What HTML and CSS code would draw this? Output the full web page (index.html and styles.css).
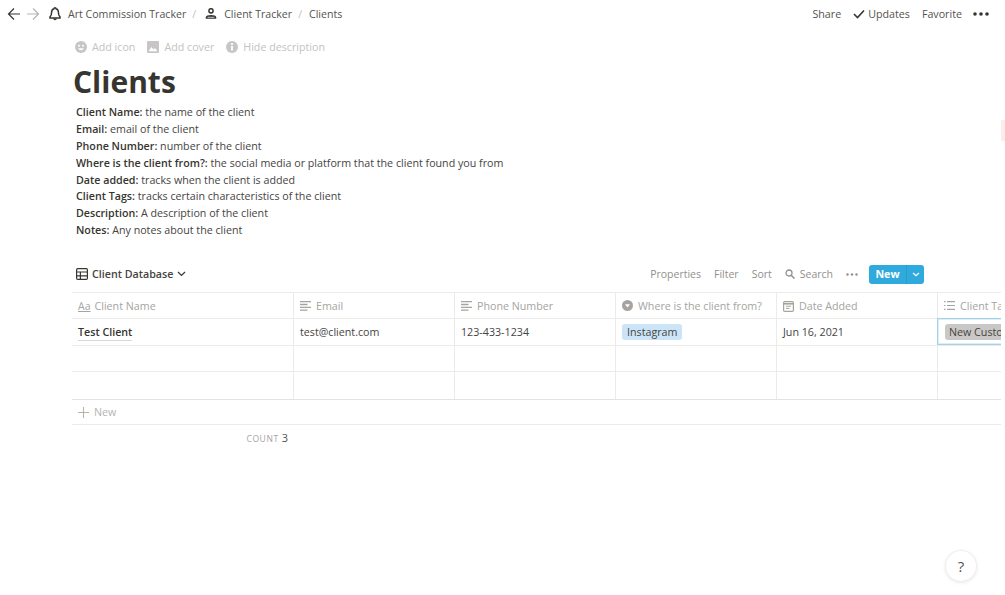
FILE: index.html
```html
<!DOCTYPE html>
<html lang="en">
<head>
<meta charset="utf-8">
<title>Clients</title>
<link rel="stylesheet" href="styles.css">
</head>
<body>
<header class="topbar">
  <div class="crumbs">
    <svg class="nav-arrow" width="14" height="14" viewBox="0 0 14 14"><path d="M13 7H1.500M7 1.500 1.500 7 7 12.500" fill="none" stroke="#37352f" stroke-width="1.200"/></svg>
    <svg class="nav-arrow dim" width="14" height="14" viewBox="0 0 14 14"><path d="M1 7h11.500M7 1.500 12.500 7 7 12.500" fill="none" stroke="#b5b4b0" stroke-width="1.200"/></svg>
    <svg class="crumb-icon first" width="12" height="14" viewBox="0 0 12 14"><path d="M6 .8c-.6 0-1 .4-1 1C3.400 2.300 2.600 3.600 2.600 5.300c0 2.500-.5 3.700-1.600 4.600v1h10v-1c-1.100-.9-1.600-2.100-1.600-4.600 0-1.700-.8-3-2.400-3.500 0-.6-.4-1-1-1Z" fill="none" stroke="#37352f" stroke-width="1.500"/><path d="M4.200 11.500a1.800 1.800 0 0 0 3.600 0Z" fill="#37352f"/></svg>
    <span class="crumb">Art Commission Tracker</span>
    <span class="sep">/</span>
    <svg class="crumb-icon" width="12" height="11" viewBox="0 0 12 11"><circle cx="6" cy="2.800" r="2.100" fill="none" stroke="#37352f" stroke-width="1.500"/><path d="M.8 10.700V9.300C.8 7.900 3 7 6 7s5.200.9 5.200 2.300v1.400Z" fill="#37352f"/><path d="M2.600 9.300h6.800" stroke="#fff" stroke-width=".7"/></svg>
    <span class="crumb">Client Tracker</span>
    <span class="sep second">/</span>
    <span class="crumb">Clients</span>
  </div>
  <div class="actions">
    <span>Share</span>
    <span class="updates"><svg width="12" height="10" viewBox="0 0 12 10"><path d="M1 5l3.500 3.500L11 1.500" fill="none" stroke="#37352f" stroke-width="1.600"/></svg>Updates</span>
    <span>Favorite</span>
    <svg class="more" width="16" height="4" viewBox="0 0 16 4"><circle cx="2" cy="2" r="1.800"/><circle cx="8" cy="2" r="1.800"/><circle cx="14" cy="2" r="1.800"/></svg>
  </div>
</header>

<main class="page">
  <div class="page-tools">
    <span class="tool"><svg width="12" height="12" viewBox="0 0 12 12"><circle cx="6" cy="6" r="6" fill="#c7c6c4"/><circle cx="4" cy="4.700" r="1" fill="#fff"/><circle cx="8" cy="4.700" r="1" fill="#fff"/><path d="M3.200 7.200c.5 1.300 1.500 2 2.800 2s2.300-.7 2.800-2Z" fill="#fff"/></svg>Add icon</span>
    <span class="tool"><svg width="12" height="12" viewBox="0 0 12 12"><rect width="12" height="12" rx="1" fill="#c7c6c4"/><path d="M1.500 10.200 4.500 6l2 2.500L8 7l2.500 3.200Z" fill="#fff"/></svg>Add cover</span>
    <span class="tool"><svg width="12" height="12" viewBox="0 0 12 12"><circle cx="6" cy="6" r="6" fill="#c7c6c4"/><rect x="5.100" y="5" width="1.800" height="4.500" fill="#fff"/><circle cx="6" cy="3.200" r="1.100" fill="#fff"/></svg>Hide description</span>
  </div>
  <h1 class="title">Clients</h1>
  <div class="description">
    <p><b>Client Name:</b> the name of the client</p>
    <p><b>Email:</b> email of the client</p>
    <p><b>Phone Number:</b> number of the client</p>
    <p><b>Where is the client from?:</b> the social media or platform that the client found you from</p>
    <p><b>Date added:</b> tracks when the client is added</p>
    <p><b>Client Tags:</b> tracks certain characteristics of the client</p>
    <p><b>Description:</b> A description of the client</p>
    <p><b>Notes:</b> Any notes about the client</p>
  </div>

  <div class="db-bar">
    <div class="db-name">
      <svg width="12" height="12" viewBox="0 0 12 12"><rect x=".6" y=".6" width="10.800" height="10.800" rx="1.200" fill="none" stroke="#37352f" stroke-width="1.200"/><path d="M.6 4h10.800M.6 7.800h10.800M4.400 4v7.400" fill="none" stroke="#37352f" stroke-width="1.200"/></svg>
      <span>Client Database</span>
      <svg width="9" height="6" viewBox="0 0 9 6"><path d="M1 1l3.500 3.500L8 1" fill="none" stroke="#37352f" stroke-width="1.200"/></svg>
    </div>
    <div class="db-actions">
      <span>Properties</span>
      <span>Filter</span>
      <span>Sort</span>
      <span class="search"><svg width="10" height="10" viewBox="0 0 10 10"><circle cx="4" cy="4" r="3" fill="none" stroke="#91908c" stroke-width="1.300"/><path d="M6.200 6.200 9.500 9.500" stroke="#91908c" stroke-width="1.500"/></svg>Search</span>
      <svg class="db-more" width="12" height="3" viewBox="0 0 12 3"><circle cx="1.500" cy="1.500" r="1.200"/><circle cx="6" cy="1.500" r="1.200"/><circle cx="10.500" cy="1.500" r="1.200"/></svg>
      <div class="new-btn"><span class="new-label">New</span><span class="new-caret"><svg width="8" height="5" viewBox="0 0 8 5"><path d="M1 1l3 2.800L7 1" fill="none" stroke="#fff" stroke-width="1.200"/></svg></span></div>
    </div>
  </div>

  <div class="table">
    <div class="row head">
      <div class="cell"><span class="aa">Aa</span>Client Name</div>
      <div class="cell"><svg class="hicon" width="11" height="10" viewBox="0 0 11 10"><path d="M0 .7h11M0 3.500h7.500M0 6.300h11M0 9.100h7.500" stroke="#a5a4a1" stroke-width="1.300"/></svg>Email</div>
      <div class="cell"><svg class="hicon" width="11" height="10" viewBox="0 0 11 10"><path d="M0 .7h11M0 3.500h7.500M0 6.300h11M0 9.100h7.500" stroke="#a5a4a1" stroke-width="1.300"/></svg>Phone Number</div>
      <div class="cell"><svg class="hicon" width="11" height="11" viewBox="0 0 11 11"><circle cx="5.500" cy="5.500" r="5.500" fill="#a5a4a1"/><path d="M3 4.300h5L5.500 7.500Z" fill="#fff"/></svg>Where is the client from?</div>
      <div class="cell"><svg class="hicon" width="11" height="12" viewBox="0 0 11 12"><rect x=".6" y="1.600" width="9.800" height="9.800" rx="1.200" fill="none" stroke="#a5a4a1" stroke-width="1.200"/><path d="M.6 3.800h9.800" stroke="#a5a4a1" stroke-width="1.600"/><path d="M3 6.200h5M3 8.400h3.500" stroke="#a5a4a1"/></svg>Date Added</div>
      <div class="cell"><svg class="hicon" width="11" height="9" viewBox="0 0 11 9"><path d="M3 .7h8M3 4.500h8M3 8.300h8M0 .7h1.500M0 4.500h1.500M0 8.300h1.500" stroke="#a5a4a1" stroke-width="1.200"/></svg>Client Tags</div>
    </div>
    <div class="row">
      <div class="cell"><span class="name">Test Client</span></div>
      <div class="cell">test@client.com</div>
      <div class="cell">123-433-1234</div>
      <div class="cell"><span class="tag blue">Instagram</span></div>
      <div class="cell">Jun 16, 2021</div>
      <div class="cell selected"><span class="tag gray">New Customer</span></div>
    </div>
    <div class="row"><div class="cell"></div><div class="cell"></div><div class="cell"></div><div class="cell"></div><div class="cell"></div><div class="cell"></div></div>
    <div class="row tall"><div class="cell"></div><div class="cell"></div><div class="cell"></div><div class="cell"></div><div class="cell"></div><div class="cell"></div></div>
    <div class="add-row"><svg width="11" height="11" viewBox="0 0 11 11"><path d="M5.500 0v11M0 5.500h11" stroke="#b5b4b0" stroke-width="1.100"/></svg>New</div>
    <div class="count"><span class="count-label">COUNT</span><span class="count-value">3</span></div>
  </div>
</main>

<div class="edge-mark"></div>
<div class="help">?</div>
</body>
</html>
```

FILE: styles.css
```css
* { box-sizing: border-box; }
html, body { margin: 0; height: 100%; }
body {
  background: #fff;
  color: #37352f;
  font-family: "Open Sans", "Noto Sans", sans-serif;
  font-size: 10.700px;
  overflow: hidden;
  position: relative;
}
.topbar {
  height: 27px;
  display: flex;
  align-items: center;
  justify-content: space-between;
  padding: 0 16px 0 7px;
}
.crumbs { display: flex; align-items: center; font-size: 10.600px; }
.nav-arrow { margin-right: 5px; }
.nav-arrow.dim { margin-right: 9px; }
.crumb-icon { margin-right: 7px; }
.crumb { color: #55534e; }
.sep { color: #c4c3c0; margin: 0 9px 0 6px; }
.sep.second { margin: 0 7px 0 6px; }
.actions { display: flex; align-items: center; gap: 12px; color: #55534e; }
.updates { display: flex; align-items: center; gap: 3px; }
.more { fill: #37352f; margin-left: -1px; }
.page { padding: 0 0 0 72px; }
.page-tools {
  display: flex;
  gap: 12px;
  color: #c4c3c0;
  padding: 12px 0 0 3px;
  height: 28px;
  line-height: 16px;
}
.tool { display: flex; align-items: center; gap: 5px; }
.title {
  margin: 0;
  font-size: 30px;
  font-weight: 700;
  line-height: 54px;
  height: 49px;
  padding-left: 1px;
  color: #37352f;
}
.description { padding-left: 4px; color: #46443f; }
.description p { margin: 0; height: 16.900px; line-height: 17px; }
.description b { font-weight: 600; color: #37352f; }
.db-bar {
  margin-top: 17px;
  height: 36px;
  width: 852px;
  display: flex;
  align-items: center;
  justify-content: space-between;
  padding-left: 4px;
}
.db-name { display: flex; align-items: center; gap: 4px; font-weight: 600; color: #46443f; }
.db-actions { display: flex; align-items: center; gap: 13px; color: #91908c; font-size: 10.500px; }
.search { display: flex; align-items: center; gap: 5px; }
.db-more { fill: #91908c; margin-right: -2px; }
.new-btn {
  display: flex;
  height: 19px;
  width: 55px;
  background: #2eaadc;
  border-radius: 3px;
  color: #fff;
  font-weight: 700;
  font-size: 10.700px;
  align-items: center;
}
.new-label { flex: 1; text-align: center; }
.new-caret {
  width: 18px;
  height: 100%;
  border-left: 1px solid #2a9cc9;
  display: flex;
  align-items: center;
  justify-content: center;
}
.table { width: 929px; overflow: hidden; border-top: 1px solid #ecebea; }
.row {
  display: grid;
  grid-template-columns: 222px 161px 161px 161px 161px 161px;
  height: 26.500px;
  border-bottom: 1px solid #ecebea;
  color: #46443f;
}
.row.head { height: 26px; color: #a5a4a1; }
.row.tall { height: 28px; border-bottom: 1px solid #e4e3e1; }
.cell {
  border-right: 1px solid #ecebea;
  padding: 0 6px;
  display: flex;
  align-items: center;
  white-space: nowrap;
  overflow: hidden;
}
.hicon { margin-right: 5px; flex: none; }
.aa { color: #a5a4a1; font-size: 10.500px; text-decoration: underline; margin-right: 4px; }
.name { font-weight: 600; color: #37352f; border-bottom: 1px solid #d9d8d6; line-height: 15px; margin-top: 2px; }
.tag { padding: 0 5px; border-radius: 3px; height: 16px; line-height: 16px; }
.tag.blue { background: #cce4f7; }
.tag.gray { background: #c9c8c6; padding-left: 4px; }
.selected {
  border-left: 1px solid #a3d3ea;
  border-top: 1px solid #a3d3ea;
  border-bottom: 1px solid #a3d3ea;
  margin-left: -1px;
  margin-top: -1px;
  padding-left: 7px;
  box-shadow: inset 0 0 0 1px #dcedf6;
  height: 27px;
}
.add-row {
  height: 25px;
  display: flex;
  align-items: center;
  gap: 5px;
  padding-left: 6px;
  color: #b5b4b0;
  border-bottom: 1px solid #ecebea;
}
.count {
  width: 222px;
  display: flex;
  justify-content: flex-end;
  align-items: baseline;
  gap: 3px;
  padding: 5px 6px 0 0;
}
.count-label { font-size: 8.500px; letter-spacing: .6px; color: #a5a4a1; }
.count-value { color: #55534e; font-size: 11px; }
.edge-mark {
  position: absolute;
  right: 0;
  top: 120px;
  width: 4px;
  height: 21px;
  background: #fdecea;
}
.help {
  position: absolute;
  left: 946px;
  top: 551px;
  width: 30px;
  height: 30px;
  border-radius: 50%;
  background: #fff;
  box-shadow: 0 0 0 1px #efefee, 0 1px 4px rgba(15, 15, 15, .14);
  display: flex;
  align-items: center;
  justify-content: center;
  font-size: 15px;
  color: #55534e;
}
```
